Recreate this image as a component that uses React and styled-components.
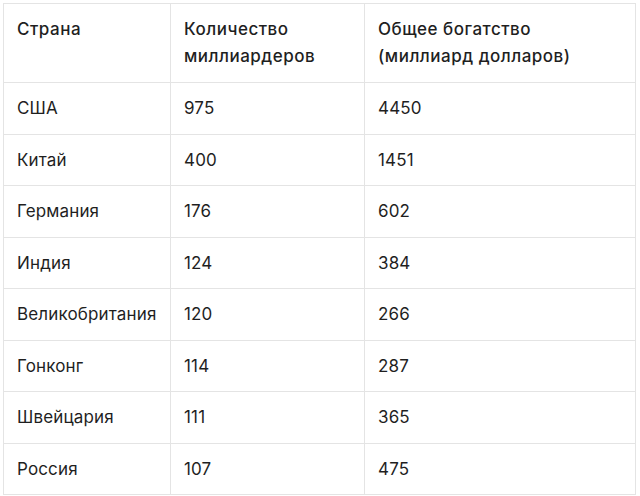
import React from "react";
import styled, { createGlobalStyle } from "styled-components";

const Global = createGlobalStyle`
  html, body { margin: 0; padding: 0; background: #fff; }
  body { font-family: Inter, "Noto Sans", sans-serif; color: #222; }
`;

const Wrap = styled.div`
  padding: 3px 5px 0 3px;
`;

const Table = styled.table`
  border-collapse: collapse;
  width: 632px;
  table-layout: fixed;
  font-size: 17px;
  line-height: 27px;
  color: #1f1f1f;
`;

const Col = styled.col`
  width: ${(p) => p.$w}px;
`;

const Th = styled.th`
  text-align: left;
  font-weight: 500;
  letter-spacing: 0.5px;
  vertical-align: top;
  padding: 12px 18px 12px 13px;
  border: 1px solid #e4e4e4;
`;

const Td = styled.td`
  padding: 12px 12px 11.5px 13px;
  border: 1px solid #e4e4e4;
  vertical-align: top;
  letter-spacing: 0.15px;
`;

const rows = [
  ["США", "975", "4450"],
  ["Китай", "400", "1451"],
  ["Германия", "176", "602"],
  ["Индия", "124", "384"],
  ["Великобритания", "120", "266"],
  ["Гонконг", "114", "287"],
  ["Швейцария", "111", "365"],
  ["Россия", "107", "475"],
];

export default function App() {
  return (
    <Wrap>
      <Global />
      <Table>
        <colgroup>
          <Col $w={167} />
          <Col $w={194} />
          <Col $w={271} />
        </colgroup>
        <thead>
          <tr>
            <Th>Страна</Th>
            <Th>Количество миллиардеров</Th>
            <Th>Общее богатство (миллиард долларов)</Th>
          </tr>
        </thead>
        <tbody>
          {rows.map((r) => (
            <tr key={r[0]}>
              {r.map((c, i) => (
                <Td key={i}>{c}</Td>
              ))}
            </tr>
          ))}
        </tbody>
      </Table>
    </Wrap>
  );
}
